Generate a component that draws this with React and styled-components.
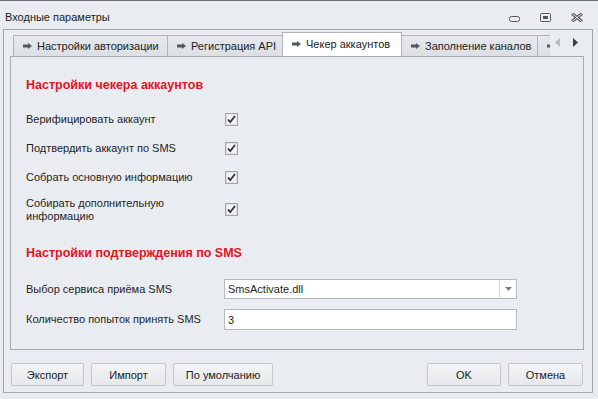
import styled, { createGlobalStyle } from "styled-components";

// глобальные стили
const GlobalStyle = createGlobalStyle`
  html, body {
    margin: 0;
    padding: 0;
    background: #e9ecf0;
  }
  body {
    font-family: "Liberation Sans", Arial, sans-serif;
    font-size: 11px;
    color: #1f1f1f;
  }
`;

const tabs = [
  { id: 1, title: "Настройки авторизации", width: 155 },
  { id: 2, title: "Регистрация API", width: 116 },
  { id: 3, title: "Чекер аккаунтов", width: 120, active: true },
  { id: 4, title: "Заполнение каналов", width: 137 },
  { id: 5, title: "", width: 80 },
];

const checks = [
  { id: 1, label: "Верифицировать аккаунт", h: 29 },
  { id: 2, label: "Подтвердить аккаунт по SMS", h: 29 },
  { id: 3, label: "Собрать основную информацию", h: 29 },
  { id: 4, label: "Собирать дополнительную информацию", h: 35 },
];

const Arrow = () => (
  <svg width="9" height="6" viewBox="0 0 9 6" style={{ flexShrink: 0 }}>
    <path d="M0 1.5h5V0l4 3-4 3V4.5H0z" fill="#55585d" />
  </svg>
);

const Check = () => (
  <svg width="9" height="9" viewBox="0 0 9 9">
    <path d="M1 4.5l2.2 2.6L8 1" fill="none" stroke="#333" strokeWidth="1.8" />
  </svg>
);

const App = () => {
  return (
    <>
      <GlobalStyle />
      <Window>
        <TitleBar>
          <Title>Входные параметры</Title>
          <Controls>
            <svg width="11" height="6" viewBox="0 0 11 6">
              <rect x="0.5" y="0.5" width="10" height="5" rx="2" fill="none" stroke="#555" />
            </svg>
            <svg width="11" height="9" viewBox="0 0 11 9">
              <rect x="0.5" y="0.5" width="10" height="8" rx="1" fill="none" stroke="#555" />
              <rect x="3" y="3" width="5" height="3" fill="#555" />
            </svg>
            <svg width="12" height="9" viewBox="0 0 12 9">
              <path d="M1 0.5l10 8M11 0.5l-10 8" stroke="#555" strokeWidth="3" />
              <path d="M1 0.5l10 8M11 0.5l-10 8" stroke="#e9ecf0" strokeWidth="1" />
            </svg>
          </Controls>
        </TitleBar>

        <Frame>
          <TabRow>
            <TabStrip>
              {tabs.map((t) => (
                <Tab key={t.id} $w={t.width} $active={t.active}>
                  <Arrow />
                  {t.title}
                </Tab>
              ))}
            </TabStrip>
            <Scroll>
              <svg width="5" height="9" viewBox="0 0 5 9">
                <path d="M5 0v9L0 4.5z" fill="#b8bcc2" />
              </svg>
              <svg width="5" height="9" viewBox="0 0 5 9">
                <path d="M0 0v9l5-4.5z" fill="#3c3f44" />
              </svg>
            </Scroll>
          </TabRow>

          <Page>
            <Header>Настройки чекера аккаунтов</Header>
            {checks.map((c) => (
              <Row key={c.id} $h={c.h}>
                <Label $wrap={c.h > 29}>{c.label}</Label>
                <CheckBox>
                  <Check />
                </CheckBox>
              </Row>
            ))}

            <Header $top={18}>Настройки подтверждения по SMS</Header>
            <Row $h={20} $top={6}>
              <Label>Выбор сервиса приёма SMS</Label>
              <Select>
                <span>SmsActivate.dll</span>
                <DropButton>
                  <svg width="7" height="4" viewBox="0 0 7 4">
                    <path d="M0 0h7L3.5 4z" fill="#7b7f85" />
                  </svg>
                </DropButton>
              </Select>
            </Row>
            <Row $h={21} $top={10}>
              <Label>Количество попыток принять SMS</Label>
              <Input>3</Input>
            </Row>
          </Page>

          <Buttons>
            <Group>
              <Button $w={73}>Экспорт</Button>
              <Button $w={75}>Импорт</Button>
              <Button $w={100}>По умолчанию</Button>
            </Group>
            <Group>
              <Button $w={74}>OK</Button>
              <Button $w={75}>Отмена</Button>
            </Group>
          </Buttons>
        </Frame>
      </Window>
    </>
  );
};

export default App;

// styled-components
const Window = styled.div`
  width: 598px;
  height: 399px;
  box-sizing: border-box;
  border-top: 1px solid #6f7277;
  display: flex;
  flex-direction: column;
`;
const TitleBar = styled.div`
  height: 28px;
  display: flex;
  align-items: center;
  justify-content: space-between;
  padding: 0 15px 0 5px;
`;
const Title = styled.div`
  font-size: 11px;
  color: #222;
  margin-top: 4px;
`;
const Controls = styled.div`
  display: flex;
  align-items: flex-end;
  gap: 20px;
  margin-top: 5px;
`;
const Frame = styled.div`
  margin: 0 5px 0 3px;
  height: 364px;
  box-sizing: border-box;
  border: 1px solid #a3a6ab;
  display: flex;
  flex-direction: column;
`;
const TabRow = styled.div`
  height: 26px;
  display: flex;
  align-items: flex-end;
  padding-left: 9px;
`;
const TabStrip = styled.div`
  width: 537px;
  height: 26px;
  display: flex;
  align-items: flex-end;
  overflow: hidden;
`;
const Tab = styled.div`
  flex-shrink: 0;
  box-sizing: border-box;
  width: ${(p) => p.$w}px;
  height: ${(p) => (p.$active ? 24 : 21)}px;
  margin-right: -1px;
  border: 1px solid #b1b5bb;
  border-bottom: none;
  background: ${(p) =>
    p.$active ? "#ffffff" : "linear-gradient(#e6e8ec, #dcdfe4)"};
  position: relative;
  z-index: ${(p) => (p.$active ? 1 : 0)};
  display: flex;
  align-items: center;
  gap: 5px;
  padding: 0 0 ${(p) => (p.$active ? 2 : 0)}px 9px;
  font-size: 11px;
  color: #222;
  white-space: nowrap;
`;
const Scroll = styled.div`
  flex: 1;
  height: 26px;
  display: flex;
  align-items: center;
  gap: 13px;
  padding: 0 0 2px 5px;
  box-sizing: border-box;
`;
const Page = styled.div`
  margin: 0 8px 0 6px;
  height: 294px;
  box-sizing: border-box;
  border: 1px solid #a8acb2;
  padding: 20px 0 0 15px;
  display: flex;
  flex-direction: column;
`;
const Header = styled.div`
  height: 16px;
  line-height: 16px;
  margin-top: ${(p) => p.$top || 0}px;
  margin-bottom: 12px;
  font-size: 12.5px;
  font-weight: bold;
  color: #e3141c;
`;
const Row = styled.div`
  height: ${(p) => p.$h}px;
  margin-top: ${(p) => p.$top || 0}px;
  display: grid;
  grid-template-columns: 198px 293px;
  align-items: center;
`;
const Label = styled.div`
  font-size: 11px;
  line-height: 13px;
  max-width: ${(p) => (p.$wrap ? "140px" : "none")};
`;
const CheckBox = styled.div`
  width: 13px;
  height: 13px;
  margin-left: 1px;
  box-sizing: border-box;
  border: 1px solid #a0a3a8;
  box-shadow: inset 0 0 0 1px #e2e4e8;
  background: #f1f2f4;
  display: flex;
  align-items: center;
  justify-content: center;
`;
const Select = styled.div`
  height: 20px;
  box-sizing: border-box;
  border: 1px solid #b6bac0;
  background: #fff;
  display: flex;
  align-items: center;
  justify-content: space-between;
  padding-left: 3px;
  font-size: 11px;
`;
const DropButton = styled.div`
  width: 16px;
  height: 18px;
  border-left: 1px solid #d3d6da;
  display: flex;
  align-items: center;
  justify-content: center;
`;
const Input = styled.div`
  height: 21px;
  box-sizing: border-box;
  border: 1px solid #b6bac0;
  background: #fff;
  display: flex;
  align-items: center;
  padding-left: 3px;
  font-size: 11px;
`;
const Buttons = styled.div`
  display: flex;
  justify-content: space-between;
  padding: 13px 9px 0 7px;
`;
const Group = styled.div`
  display: flex;
  gap: 7px;
`;
const Button = styled.div`
  width: ${(p) => p.$w}px;
  height: 23px;
  box-sizing: border-box;
  border: 1px solid #c2c5ca;
  border-radius: 2px;
  background: linear-gradient(#f3f4f6, #e6e8eb);
  display: flex;
  align-items: center;
  justify-content: center;
  font-size: 11px;
  color: #222;
`;
